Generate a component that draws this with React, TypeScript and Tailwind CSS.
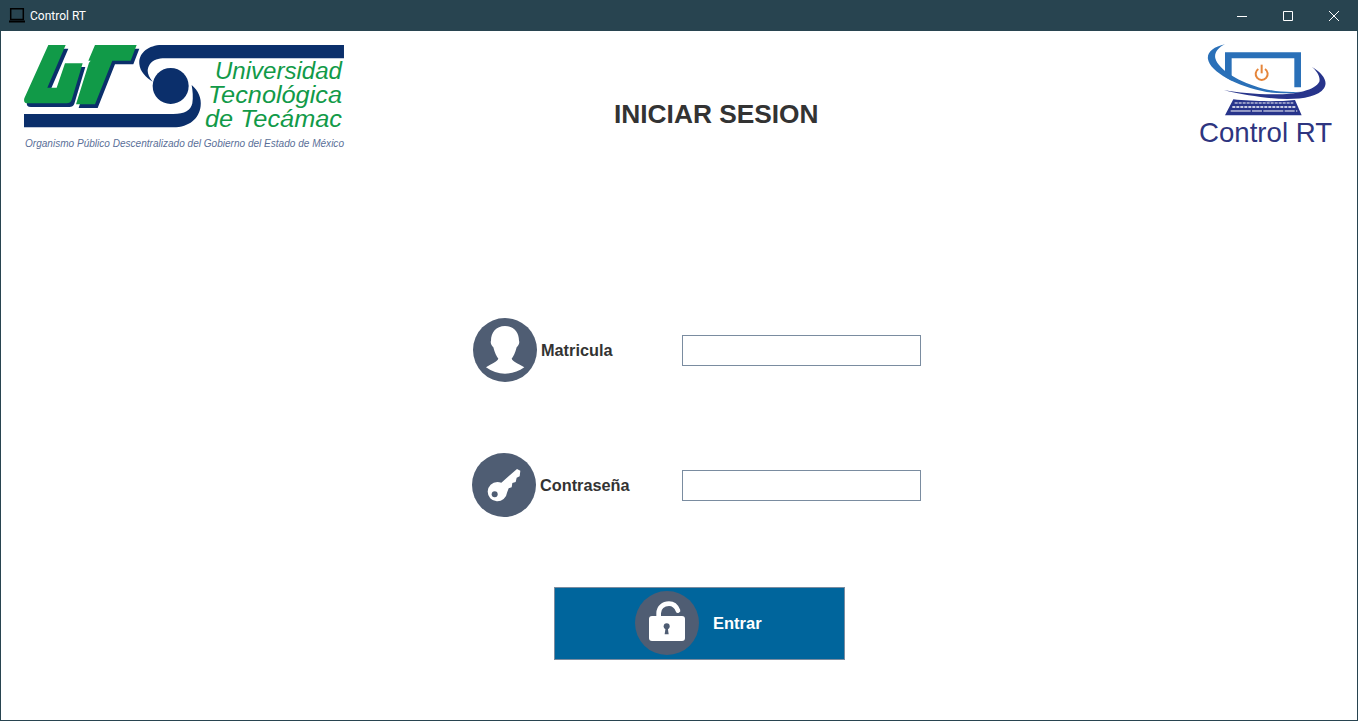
import { ReactNode } from "react";

const SLATE = "#4f5d73";

function UttLogo() {
  return (
    <svg width="322" height="107" viewBox="24 45 322 107" className="block shrink-0">
      {/* UT letters, coordinates are 3x page px from (20,40) */}
      <g transform="translate(20 40) scale(0.3333)">
        <g fill="#0b2f6b" transform="translate(8 11)">
          <path d="M85 15H137L82 143H110L135 70H188L155 180Q151 190 140 190H25Q9 190 13 175Z" />
          <path d="M225 15H350L332 62H277L225 193H168L207 68L212 62H205Z" />
        </g>
        <g fill="#119a48">
          <path d="M85 15H137L82 143H110L135 70H188L155 180Q151 190 140 190H25Q9 190 13 175Z" />
          <path d="M225 15H350L332 62H277L225 193H168L207 68L212 62H205Z" />
        </g>
      </g>
      {/* swoosh, coordinates are 3x page px from (130,40) */}
      <g transform="translate(130 40) scale(0.3333)" fill="#0b2f6b">
        <path d="M642 15H95C55 15 25 40 28 72C30 95 48 112 68 125C52 105 48 90 60 72C70 60 85 55 105 55H642Z" />
        <path d="M-318 222H130C165 222 182 212 187 190C190 172 188 152 185 135C205 152 215 175 212 198C208 235 178 262 130 262H-318Z" />
        <circle cx="122" cy="138" r="54" />
      </g>
      <g fill="#119a48" fontFamily="'Liberation Sans', sans-serif" fontStyle="italic" fontSize="23.5">
        <text x="215" y="79" textLength="127" lengthAdjust="spacingAndGlyphs">Universidad</text>
        <text x="208" y="103" textLength="134" lengthAdjust="spacingAndGlyphs">Tecnológica</text>
        <text x="205" y="127" textLength="137" lengthAdjust="spacingAndGlyphs">de Tecámac</text>
      </g>
      <text x="25" y="147" fill="#5a6f98" fontFamily="'Liberation Sans', sans-serif" fontStyle="italic" fontSize="10" textLength="319" lengthAdjust="spacingAndGlyphs">
        Organismo Público Descentralizado del Gobierno del Estado de México
      </text>
    </svg>
  );
}

function ControlLogo() {
  return (
    <svg width="134" height="106" viewBox="1199 43 134 106" className="block shrink-0">
      <g transform="translate(1200 40) scale(0.3333)">
        <path d="M75 37H303V142H283V55H95V122L75 110Z" fill="#2a70b8" />
        <path d="M75 13C40 20 20 38 24 58C30 95 110 140 200 156C240 162 280 160 305 155C270 158 230 156 190 146C120 128 55 90 46 55C42 38 55 22 75 13Z" fill="#2a70b8" />
        <path d="M335 80C370 100 385 125 372 145C350 178 270 182 200 173C150 167 105 160 72 150C115 158 170 163 225 163C290 163 345 150 358 125C362 110 350 92 335 80Z" fill="#27348b" />
        <path d="M100 178C150 184 230 186 285 180L305 226H75Z" fill="#27348b" />
        <g stroke="#fff" strokeWidth="3" fill="none" strokeDasharray="9 3">
          <path d="M104 189H280" />
          <path d="M97 201H286" strokeWidth="4" />
          <path d="M92 213H292" strokeDasharray="60 4 30 4" />
        </g>
        <g stroke="#e5853a" strokeWidth="6" fill="none">
          <path d="M175 87A18 18 0 1 0 195 87" />
          <path d="M185 74V100" />
        </g>
      </g>
      <text x="1199" y="142" fill="#2e3580" fontFamily="'Liberation Sans', sans-serif" fontSize="28" textLength="133" lengthAdjust="spacingAndGlyphs">
        Control RT
      </text>
    </svg>
  );
}

function PersonIcon() {
  return (
    <svg width="64" height="64" viewBox="39 24 192 192" className="block shrink-0">
      <circle cx="135" cy="120" r="96" fill={SLATE} />
      <path
        d="M135 48C108 48 93 68 93 92C90 98 95 108 100 112C104 128 110 140 115 146C112 155 95 160 78 172C95 185 115 191 135 191C155 191 175 185 193 172C175 160 158 155 155 146C160 140 166 128 170 112C175 108 180 98 177 92C177 68 162 48 135 48Z"
        fill="#fff"
      />
    </svg>
  );
}

function KeyIcon() {
  return (
    <svg width="64" height="64" viewBox="36 429 192 192" className="block shrink-0">
      <circle cx="132" cy="525" r="96" fill={SLATE} />
      <path
        d="M112 516A29 29 0 1 0 141 548L146 535L155 532L157 519L167 516L170 503L179 499L181 482L171 477L124 518Q118 516 112 516Z"
        fill="#fff"
      />
      <circle cx="104" cy="553" r="9" fill={SLATE} />
    </svg>
  );
}

function LockIcon() {
  return (
    <svg width="64" height="64" viewBox="270 33 192 192" className="block shrink-0">
      <circle cx="366" cy="129" r="96" fill={SLATE} />
      <path d="M341 110V100C341 82 355 71 372 71C385 71 394 79 399 92" fill="none" stroke="#fff" strokeWidth="14" strokeLinecap="round" />
      <rect x="312" y="108" width="108" height="75" rx="9" fill="#fff" />
      <circle cx="365" cy="139" r="9" fill={SLATE} />
      <path d="M362 142H368L371 163H359Z" fill={SLATE} />
    </svg>
  );
}

function FieldRow({ icon, label, labelWidth, className }: { icon: ReactNode; label: string; labelWidth: string; className: string }) {
  return (
    <div className={`flex items-center gap-1 ${className}`}>
      {icon}
      <label className={`${labelWidth} text-[16.3px] font-bold text-[#333333]`}>{label}</label>
      <input type="text" className="w-[239px] h-[31px] border border-[#7a8ca0] bg-white outline-none" />
    </div>
  );
}

export default function App() {
  return (
    <div className="h-screen w-full flex flex-col overflow-hidden bg-white border-x border-b border-[#284450] font-['Liberation_Sans',sans-serif]">
      {/* Title bar */}
      <div className="h-[31px] -mx-px shrink-0 flex items-center justify-between bg-[#284450]">
        <div className="flex items-center pl-[9px] gap-[5px]">
          <svg width="16" height="16" viewBox="0 0 16 16" className="block" fill="none" stroke="#000">
            <path d="M1.7 .7H14.3V11.5H1.7Z" strokeWidth="1.5" />
            <path d="M0 13.5H16" strokeWidth="2" />
          </svg>
          <span className="text-xs text-white font-['Roboto',sans-serif]">Control RT</span>
        </div>
        <div className="flex items-center h-full pr-px">
          <div className="w-[46px] h-full flex items-center justify-center">
            <svg width="10" height="10" viewBox="0 0 10 10" className="block"><path d="M0 5.5H10" stroke="#fff" /></svg>
          </div>
          <div className="w-[46px] h-full flex items-center justify-center">
            <svg width="10" height="10" viewBox="0 0 10 10" className="block"><path d="M.5.5H9.5V9.5H.5Z" stroke="#fff" fill="none" /></svg>
          </div>
          <div className="w-[46px] h-full flex items-center justify-center">
            <svg width="10" height="10" viewBox="0 0 10 10" className="block"><path d="M0 0L10 10M10 0L0 10" stroke="#fff" /></svg>
          </div>
        </div>
      </div>

      {/* Header */}
      <div className="flex items-start pl-[23px] pr-[24px] pt-[14px] h-[287px] shrink-0">
        <UttLogo />
        <h1 className="ml-[268px] mt-[54px] text-[26.3px] leading-[30px] font-bold text-[#333333]">INICIAR SESION</h1>
        <div className="ml-auto -mt-[2px]">
          <ControlLogo />
        </div>
      </div>

      {/* Form */}
      <FieldRow icon={<PersonIcon />} label="Matricula" labelWidth="w-[137px]" className="ml-[472px]" />
      <FieldRow icon={<KeyIcon />} label="Contraseña" labelWidth="w-[138px]" className="ml-[471px] mt-[71px]" />

      <button className="ml-[553px] mt-[70px] w-[291px] h-[73px] flex items-center pl-[80px] pb-px gap-[14px] bg-[#00659c] border border-[#7a8ca0] text-[16.5px] font-bold text-white">
        <LockIcon />
        Entrar
      </button>
    </div>
  );
}
